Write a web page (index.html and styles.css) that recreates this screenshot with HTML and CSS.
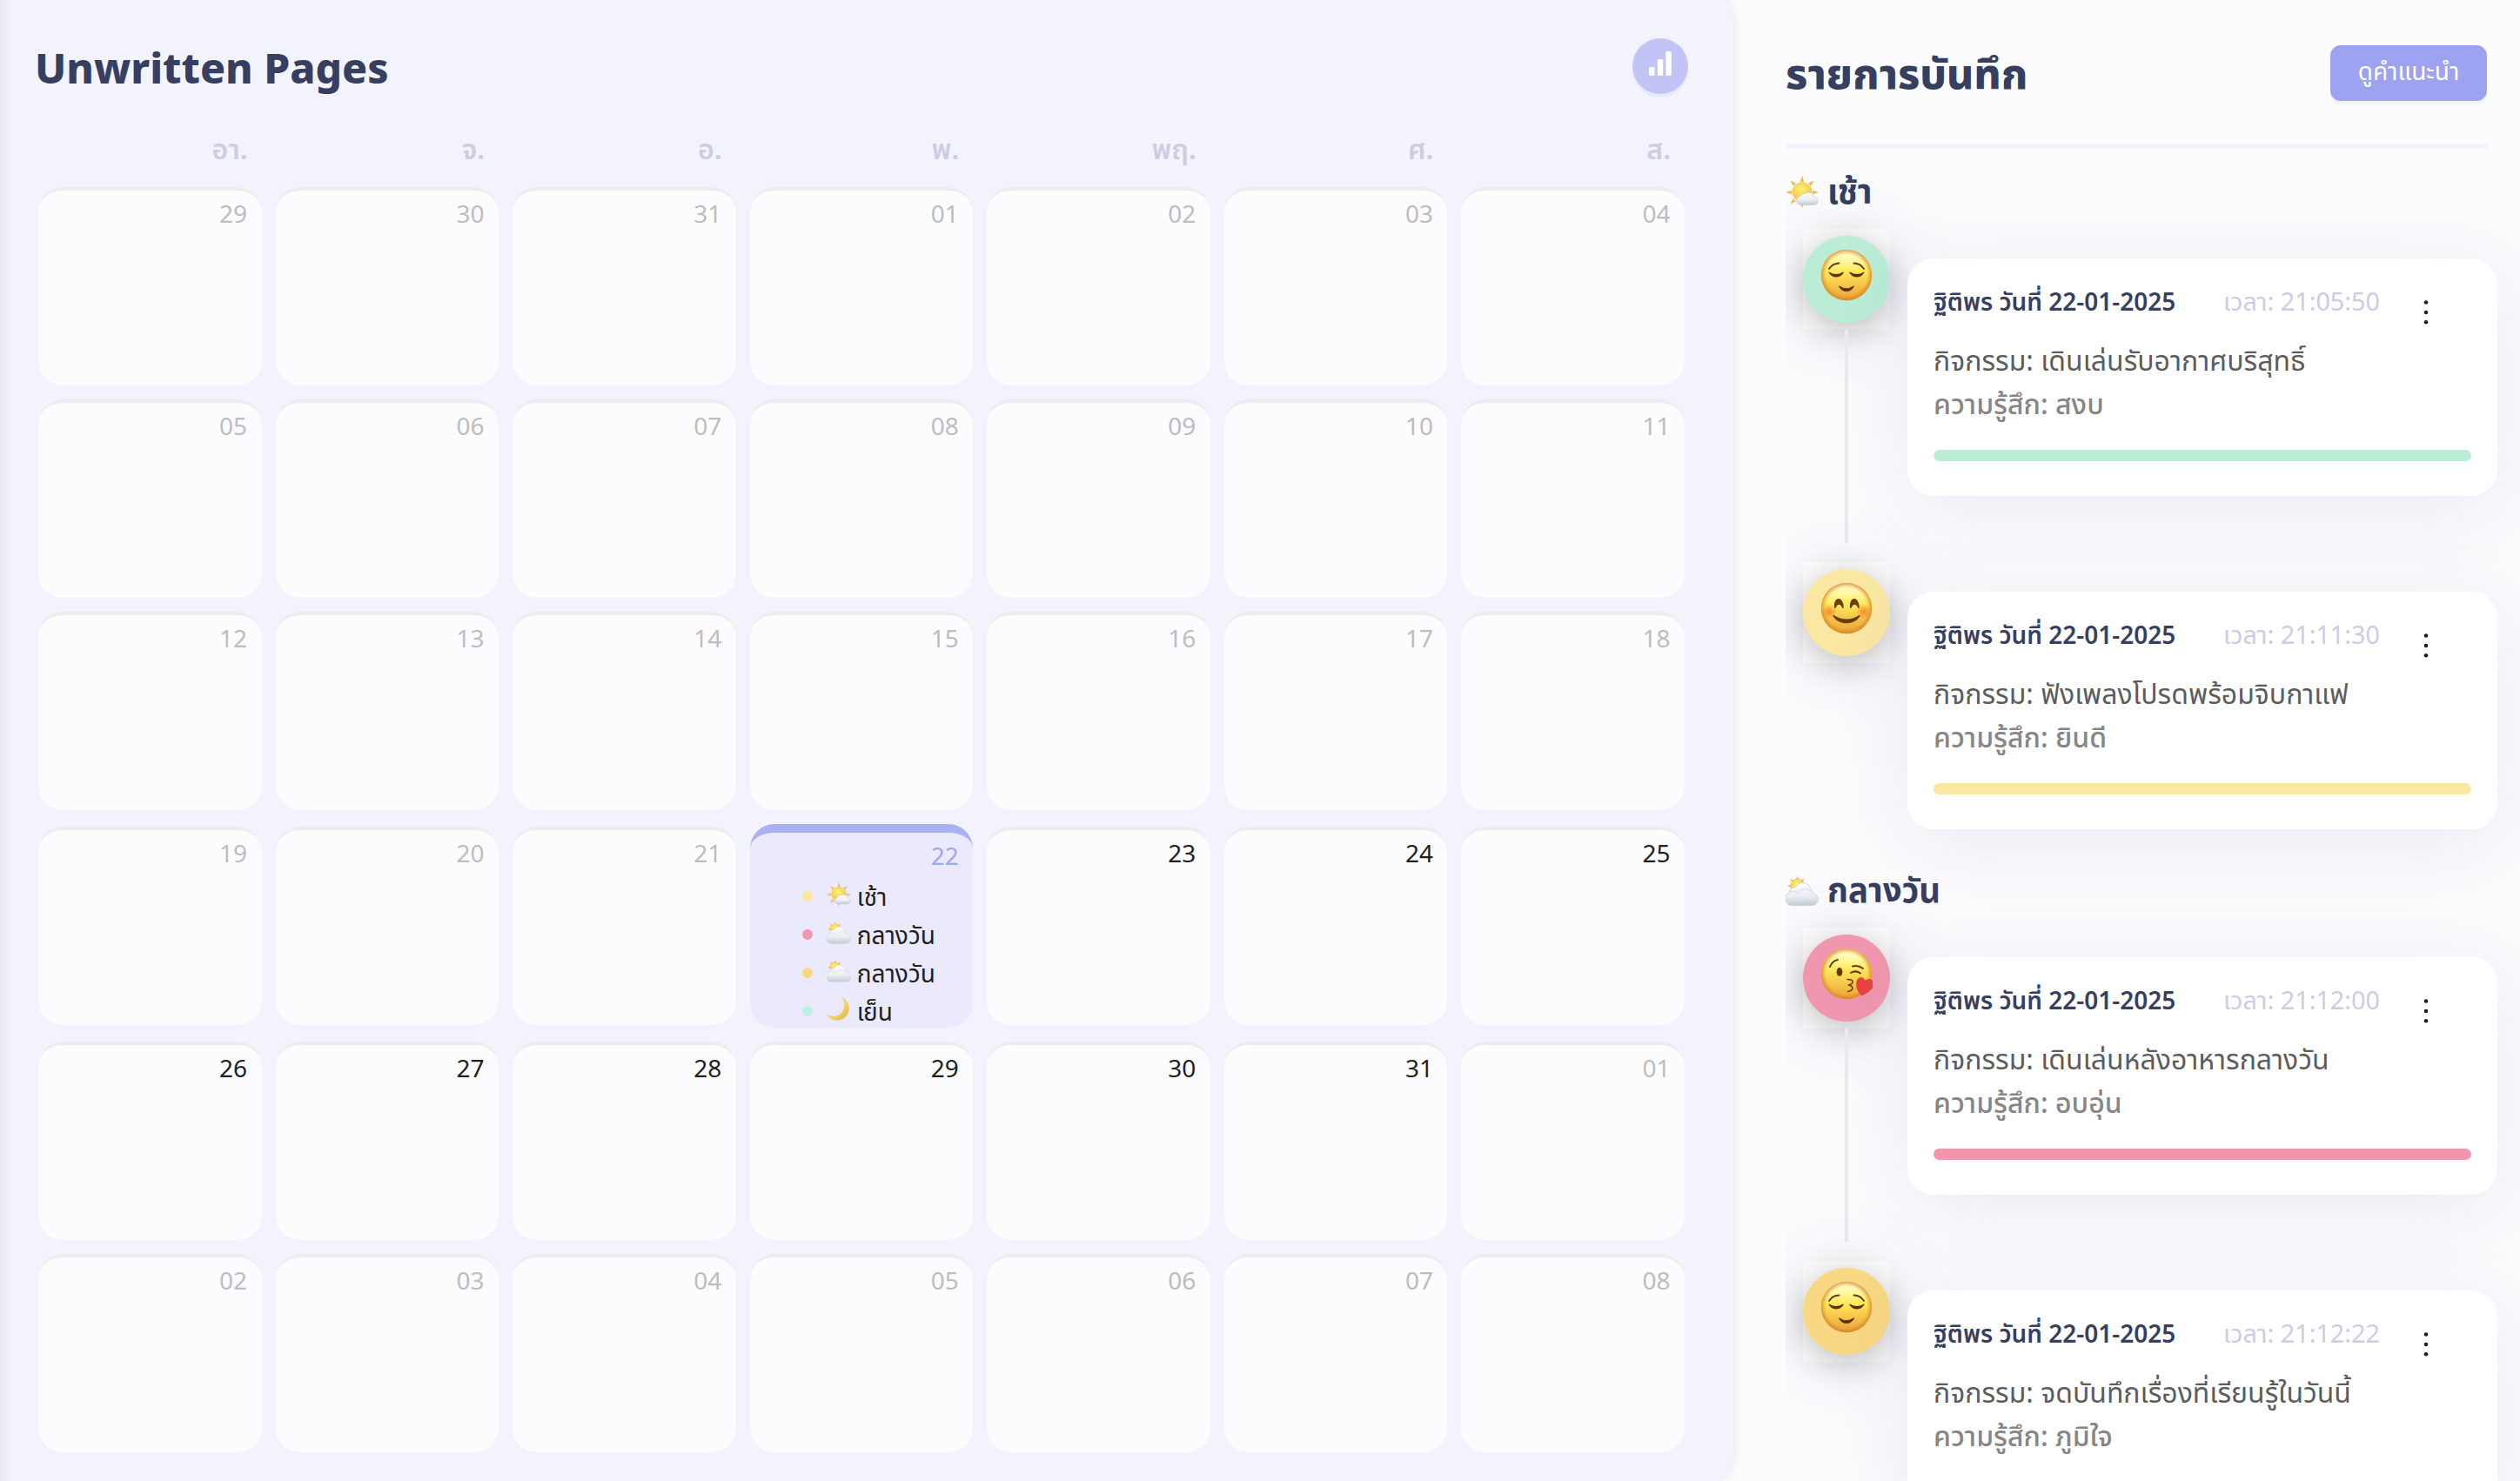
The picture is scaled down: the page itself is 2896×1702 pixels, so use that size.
FILE: index.html
```html
<!DOCTYPE html>
<html lang="th">
<head>
<meta charset="utf-8">
<title>Unwritten Pages</title>
<link rel="stylesheet" href="styles.css">
</head>
<body>
<svg class="defs" aria-hidden="true">
  <defs>
    <radialGradient id="sunFill" cx="45%" cy="35%" r="70%">
      <stop offset="0" stop-color="#fdf07c"/><stop offset="0.6" stop-color="#f9d84e"/><stop offset="1" stop-color="#eeb040"/>
    </radialGradient>
    <linearGradient id="cloudFill" x1="0" y1="0" x2="0" y2="1">
      <stop offset="0" stop-color="#fdfdfe"/><stop offset="0.6" stop-color="#edeff3"/><stop offset="1" stop-color="#c3ccd6"/>
    </linearGradient>
    <linearGradient id="moonFill" x1="0" y1="0" x2="1" y2="1">
      <stop offset="0" stop-color="#fbe37a"/><stop offset="0.6" stop-color="#f6d35c"/><stop offset="1" stop-color="#e3ab3c"/>
    </linearGradient>
    <linearGradient id="faceFill" x1="0" y1="0" x2="0" y2="1">
      <stop offset="0" stop-color="#fffcd8"/><stop offset="0.2" stop-color="#fff9a6"/><stop offset="0.42" stop-color="#fdea5c"/><stop offset="0.72" stop-color="#f6c248"/><stop offset="1" stop-color="#eba03a"/>
    </linearGradient>
    <radialGradient id="faceEdge" cx="50%" cy="50%" r="50%">
      <stop offset="0.8" stop-color="#e08a20" stop-opacity="0"/><stop offset="1" stop-color="#d67f22" stop-opacity="0.75"/>
    </radialGradient>
    <radialGradient id="blush"><stop offset="0" stop-color="#f07a28" stop-opacity="0.8"/><stop offset="1" stop-color="#f07a28" stop-opacity="0"/></radialGradient>
    <symbol id="sun-small-cloud" viewBox="0 0 38 38">
      <path fill="#f0bd55" d="M19 0l2.2 7h-4.4zM19 37.500l2.200-7h-4.400zM0 19l7-2.200v4.400zM38 19l-7-2.200v4.400zM5.600 5.600l6.400 3.200-3.200 3.200zM32.400 5.600l-3.200 6.400-3.200-3.200zM5.600 32.400l3.200-6.400 3.200 3.200z"/>
      <circle cx="19" cy="18.500" r="10.800" fill="url(#sunFill)" stroke="#e8b04a" stroke-width=".6"/>
      <path fill="url(#cloudFill)" stroke="#bfc8d2" stroke-width=".6" d="M17.500 33.500a5 5 0 0 1-.6-9.900 4.500 4.500 0 0 1 5.600-3.200 6.200 6.200 0 0 1 9.800 3.700 4.800 4.800 0 0 1 1.300 9.400z"/>
    </symbol>
    <symbol id="sun-big-cloud" viewBox="0 0 38 38">
      <path fill="#f0bd55" d="M13.500 1.500l2 5.500h-4zM5.500 4.500l5 3-2.800 2.800zM21.500 4.500l-5 3 2.800 2.800zM2 13l5.500-2v4.500z"/>
      <circle cx="13.500" cy="13" r="7.800" fill="url(#sunFill)" stroke="#e8b04a" stroke-width=".6"/>
      <path fill="url(#cloudFill)" stroke="#c3cbd5" stroke-width=".7" d="M8 35.500a7.800 7.800 0 0 1-4-14.700 7 7 0 0 1 7.500-6.300 9.200 9.200 0 0 1 17.200 2.500 5.200 5.200 0 0 1 3.200 4.500A7.100 7.100 0 0 1 30.500 35.500z"/>
      <path fill="none" stroke="#d3d9e1" stroke-width=".9" d="M4 20.800a7 7 0 0 1 10.500 1.700M15 21a9 9 0 0 1 14.500-1"/>
    </symbol>
    <symbol id="moon" viewBox="0 0 38 38">
      <path fill="url(#moonFill)" stroke="#deb050" stroke-width=".5" d="M25 1a18.500 18.500 0 1 1-24.300 26.500C9 32 20 31.500 25 22.500c4-7 3.500-15 0-21.500z"/>
    </symbol>
    <symbol id="face" viewBox="0 0 60 60">
      <circle cx="30" cy="30" r="29.200" fill="url(#faceFill)"/>
      <circle cx="30" cy="30" r="29.200" fill="url(#faceEdge)"/>
    </symbol>
    <symbol id="face-relieved" viewBox="0 0 60 60">
      <use href="#face"/>
      <g fill="none" stroke="#66390c" stroke-linecap="round" stroke-width="1.800">
        <path d="M10 23q4-6.500 11.500-6.500M50 23q-4-6.500-11.500-6.500"/>
      </g>
      <path fill="#5b300a" d="M10 26.500q8 5 16 0c.8 0 .8.8.4 1.400-4.400 6.200-12.200 6.200-16.400 0-.5-.8-.5-1.400 0-1.400zM34 26.500q8 5 16 0c.5 0 .5.6 0 1.400-4.200 6.200-12 6.200-16.400 0-.4-.6-.4-1.400.4-1.400zM22 42.500q8 5.500 16 0c.8-.2 1 .4.6 1.200-4 7-13.200 7-17.200 0-.4-.8-.2-1.400.6-1.200z"/>
    </symbol>
    <symbol id="face-smile" viewBox="0 0 60 60">
      <use href="#face"/>
      <circle cx="10" cy="34" r="9" fill="url(#blush)"/><circle cx="50" cy="34" r="9" fill="url(#blush)"/>
      <path fill="#6b3d0e" d="M16 29c-1-13 10-13.500 10.800 0 0 1.400-1.200 1.400-1.800.2-2.200-4.600-5-4.600-7.200 0-.6 1.200-1.700 1.200-1.800-.2zM34 29c-1-13 10-13.500 10.800 0 0 1.400-1.200 1.400-1.800.2-2.200-4.600-5-4.600-7.200 0-.6 1.200-1.700 1.200-1.800-.2zM15.500 38q14.500 9 29 0c1-.4 1.400.4.8 1.400-6.600 10.400-24 10.400-30.600 0-.6-1-.2-1.800.8-1.400z"/>
    </symbol>
    <symbol id="face-kiss" viewBox="0 0 60 60">
      <use href="#face"/>
      <g fill="none" stroke="#66390c" stroke-linecap="round" stroke-width="2">
        <path d="M11 22q3-7 9-8M37 21.500q6-2 12 2.500M35 29q5.500-3.500 11 .5"/>
        <path stroke-width="1.600" d="M31 36.500c8 0 8 5 1 6.500 7 1 6 6.500-.5 7.500"/>
      </g>
      <ellipse cx="22" cy="28" rx="3.400" ry="5" fill="#66390c"/>
      <path fill="#e8433f" stroke="#c62f30" stroke-width=".5" d="M47.500 55C41 49 40.500 41 42.500 37c2-4 7.500-3.300 9 1.300 3.500-3.300 9-1.600 9.800 2.200.9 4.800-6.300 11.500-13.800 14.500z"/>
    </symbol>
    <symbol id="more" viewBox="0 0 8 30"><g fill="#1f1f1f"><circle cx="4" cy="3.500" r="2.300"/><circle cx="4" cy="15" r="2.300"/><circle cx="4" cy="26.300" r="2.300"/></g></symbol>
  </defs>
</svg>
<div class="app">
  <main class="calendar-panel">
    <header class="calendar-head">
      <h1 class="title">Unwritten Pages</h1>
      <button class="stats" aria-label="สถิติ">
        <svg width="28" height="30" viewBox="0 0 28 30"><g fill="#fff"><rect x="1" y="19" width="6.500" height="10" rx="1.300"/><rect x="10.700" y="10" width="6.500" height="19" rx="1.300"/><rect x="20.300" y="1" width="6.500" height="28" rx="1.300"/></g></svg>
      </button>
    </header>
    <div class="weekdays"><span>อา.</span><span>จ.</span><span>อ.</span><span>พ.</span><span>พฤ.</span><span>ศ.</span><span>ส.</span></div>
    <div class="days">
      <div class="day">29</div><div class="day">30</div><div class="day">31</div><div class="day">01</div><div class="day">02</div><div class="day">03</div><div class="day">04</div>
      <div class="day">05</div><div class="day">06</div><div class="day">07</div><div class="day">08</div><div class="day">09</div><div class="day">10</div><div class="day">11</div>
      <div class="day">12</div><div class="day">13</div><div class="day">14</div><div class="day">15</div><div class="day">16</div><div class="day">17</div><div class="day">18</div>
      <div class="day">19</div><div class="day">20</div><div class="day">21</div>
      <div class="day today">22
        <ul class="events">
          <li><i class="dot lemon"></i><svg class="sky"><use href="#sun-small-cloud"/></svg><span>เช้า</span></li>
          <li><i class="dot pink"></i><svg class="sky"><use href="#sun-big-cloud"/></svg><span>กลางวัน</span></li>
          <li><i class="dot amber"></i><svg class="sky"><use href="#sun-big-cloud"/></svg><span>กลางวัน</span></li>
          <li><i class="dot aqua"></i><svg class="sky"><use href="#moon"/></svg><span>เย็น</span></li>
        </ul>
      </div>
      <div class="day open">23</div><div class="day open">24</div><div class="day open">25</div>
      <div class="day open">26</div><div class="day open">27</div><div class="day open">28</div><div class="day open">29</div><div class="day open">30</div><div class="day open">31</div><div class="day">01</div>
      <div class="day">02</div><div class="day">03</div><div class="day">04</div><div class="day">05</div><div class="day">06</div><div class="day">07</div><div class="day">08</div>
    </div>
  </main>
  <aside class="journal">
    <header class="journal-head">
      <h2 class="title">รายการบันทึก</h2>
      <button class="advice">ดูคำแนะนำ</button>
    </header>
    <section class="period">
      <h3 class="period-title"><svg class="sky"><use href="#sun-small-cloud"/></svg><span>เช้า</span></h3>
      <article class="entry">
        <div class="rail"><div class="halo"><div class="mood mint"><svg><use href="#face-relieved"/></svg></div></div><div class="tail"></div></div>
        <div class="card">
          <div class="meta"><b>ฐิติพร วันที่ 22-01-2025</b><time>เวลา: 21:05:50</time><svg class="more"><use href="#more"/></svg></div>
          <p class="activity">กิจกรรม: เดินเล่นรับอากาศบริสุทธิ์</p>
          <p class="feeling">ความรู้สึก: สงบ</p>
          <div class="bar mint"></div>
        </div>
      </article>
      <article class="entry last">
        <div class="rail"><div class="halo"><div class="mood lemon"><svg><use href="#face-smile"/></svg></div></div></div>
        <div class="card">
          <div class="meta"><b>ฐิติพร วันที่ 22-01-2025</b><time>เวลา: 21:11:30</time><svg class="more"><use href="#more"/></svg></div>
          <p class="activity">กิจกรรม: ฟังเพลงโปรดพร้อมจิบกาแฟ</p>
          <p class="feeling">ความรู้สึก: ยินดี</p>
          <div class="bar lemon"></div>
        </div>
      </article>
    </section>
    <section class="period">
      <h3 class="period-title"><svg class="sky"><use href="#sun-big-cloud"/></svg><span>กลางวัน</span></h3>
      <article class="entry">
        <div class="rail"><div class="halo"><div class="mood pink"><svg><use href="#face-kiss"/></svg></div></div><div class="tail"></div></div>
        <div class="card">
          <div class="meta"><b>ฐิติพร วันที่ 22-01-2025</b><time>เวลา: 21:12:00</time><svg class="more"><use href="#more"/></svg></div>
          <p class="activity">กิจกรรม: เดินเล่นหลังอาหารกลางวัน</p>
          <p class="feeling">ความรู้สึก: อบอุ่น</p>
          <div class="bar pink"></div>
        </div>
      </article>
      <article class="entry last">
        <div class="rail"><div class="halo"><div class="mood amber"><svg><use href="#face-relieved"/></svg></div></div></div>
        <div class="card">
          <div class="meta"><b>ฐิติพร วันที่ 22-01-2025</b><time>เวลา: 21:12:22</time><svg class="more"><use href="#more"/></svg></div>
          <p class="activity">กิจกรรม: จดบันทึกเรื่องที่เรียนรู้ในวันนี้</p>
          <p class="feeling">ความรู้สึก: ภูมิใจ</p>
          <div class="bar amber"></div>
        </div>
      </article>
    </section>
  </aside>
</div>
</body>
</html>
```
FILE: styles.css
```css
* { box-sizing: border-box; margin: 0; padding: 0; }
body { font-family: "Noto Sans", "Noto Sans Thai", sans-serif; background: #fcfcfe; overflow: hidden; }
.defs { position: absolute; width: 0; height: 0; }
.app { display: flex; width: 2896px; height: 1702px; overflow: hidden; }
button { border: 0; font: inherit; }

.calendar-panel {
  width: 1992px; height: 1724px; flex: none; margin-top: -15px; padding: 59px 52px 0 44px;
  background: #f3f3fe; border-radius: 0 40px 40px 0;
  box-shadow: 0 0 12px rgba(0, 0, 0, .1), inset 14px 0 14px -10px rgba(40, 40, 70, .07);
}
.calendar-head { display: flex; justify-content: space-between; height: 64px; }
.title { font-size: 48px; font-weight: 800; line-height: 64px; color: #363f5f; white-space: nowrap; }
.calendar-head .title { margin-left: -4px; margin-top: 2px; }
.stats {
  width: 64px; height: 64px; border-radius: 50%; background: #c1c4f5; box-shadow: 0 4px 0 #e6eafd;
  display: grid; place-items: center; padding-bottom: 6px;
}
.weekdays, .days { display: grid; grid-template-columns: repeat(7, 1fr); column-gap: 16px; width: 1892px; }
.weekdays { height: 48px; margin-top: 39px; text-align: right; font-size: 32px; font-weight: 600; line-height: 48px; color: #cdcce2; }
.weekdays span { padding-right: 16px; }
.days { margin-top: 20px; row-gap: 16px; align-items: center; }
.day {
  height: 228px; padding: 2px 16.5px 0 0; border-radius: 28px; border-top: 4px solid #ededef; background: #fcfcfe;
  text-align: right; font-size: 28px; line-height: 48px; color: #bdbdbe;
}
.open { color: #1f1f1f; }
.today { height: 234px; border-top: 10px solid #a9b1f2; background: #ebeafd; color: #9fa6f2; }
.events { list-style: none; margin-top: 1px; color: #1f1f1f; padding-left: 60px; }
.events li { display: flex; align-items: center; height: 44px; }
.events span { margin-left: 7px; margin-top: -1px; }
.dot { width: 12px; height: 12px; border-radius: 50%; margin-right: 16px; }
.events .sky { width: 28px; height: 28px; margin-top: -4px; }
.mint { background: #bbecd6; }
.lemon { background: #fae7a2; }
.pink { background: #f096af; }
.amber { background: #f8d883; }
.aqua { background: #bcf1e6; }

.journal { flex: 1; margin-left: 60px; overflow: hidden; }
.journal-head {
  width: 806px; height: 171px; border-bottom: 6px solid #f3f3fe; padding-top: 52px;
  display: flex; justify-content: space-between; align-items: flex-start;
}
.advice {
  width: 180px; height: 64px; border-radius: 12px; background: #9da3f0; color: #fff;
  font-size: 28px; box-shadow: 0 4px 0 #f1f3fd; white-space: nowrap; padding-bottom: 1px;
}
.period-title { display: flex; align-items: center; gap: 10px; height: 92px; padding-top: 4px; font-size: 38.4px; font-weight: 700; line-height: 56px; color: #363f5f; }
.period-title .sky { width: 38px; height: 38px; margin-top: 3px; }
.entry { display: flex; height: 383px; width: 844px; }
.last { height: 328px; }
.rail { width: 140px; padding-left: 20px; flex: none; display: flex; flex-direction: column; }
.halo { width: 100px; height: 116px; padding-top: 8px; flex: none; background: #fcfcfc; box-shadow: 0 4px 90px rgba(70, 60, 140, .1); }
.mood { width: 100px; height: 100px; border-radius: 50%; box-shadow: 0 8px 40px rgba(0, 0, 0, .26); padding: 15px 0 0 20px; }
.mood svg { display: block; width: 60px; height: 60px; overflow: visible; }
.tail { width: 4px; height: 245px; margin-left: 48px; background: #ebebee; }
.card {
  width: 678px; height: 273px; margin-top: 34px; padding: 30px; border-radius: 30px; background: #fff; flex: none;
  box-shadow: 0 16px 90px rgba(70, 60, 140, .1);
}
.meta { display: flex; align-items: center; height: 44px; margin-top: -3px; font-size: 28px; line-height: 44px; white-space: nowrap; }
.meta b { width: 333px; font-weight: 600; color: #363f5f; }
.meta time { width: 229px; font-size: 28.8px; color: #cdcce4; }
.meta .more { width: 8px; height: 30px; margin-top: 26px; }
.activity, .feeling { font-size: 32px; line-height: 50px; height: 50px; white-space: nowrap; color: #5c5c5c; }
.activity { margin-top: 21px; }
.feeling { color: #868686; font-weight: 500; }
.bar { height: 13px; border-radius: 7px; margin-top: 28px; }
```
